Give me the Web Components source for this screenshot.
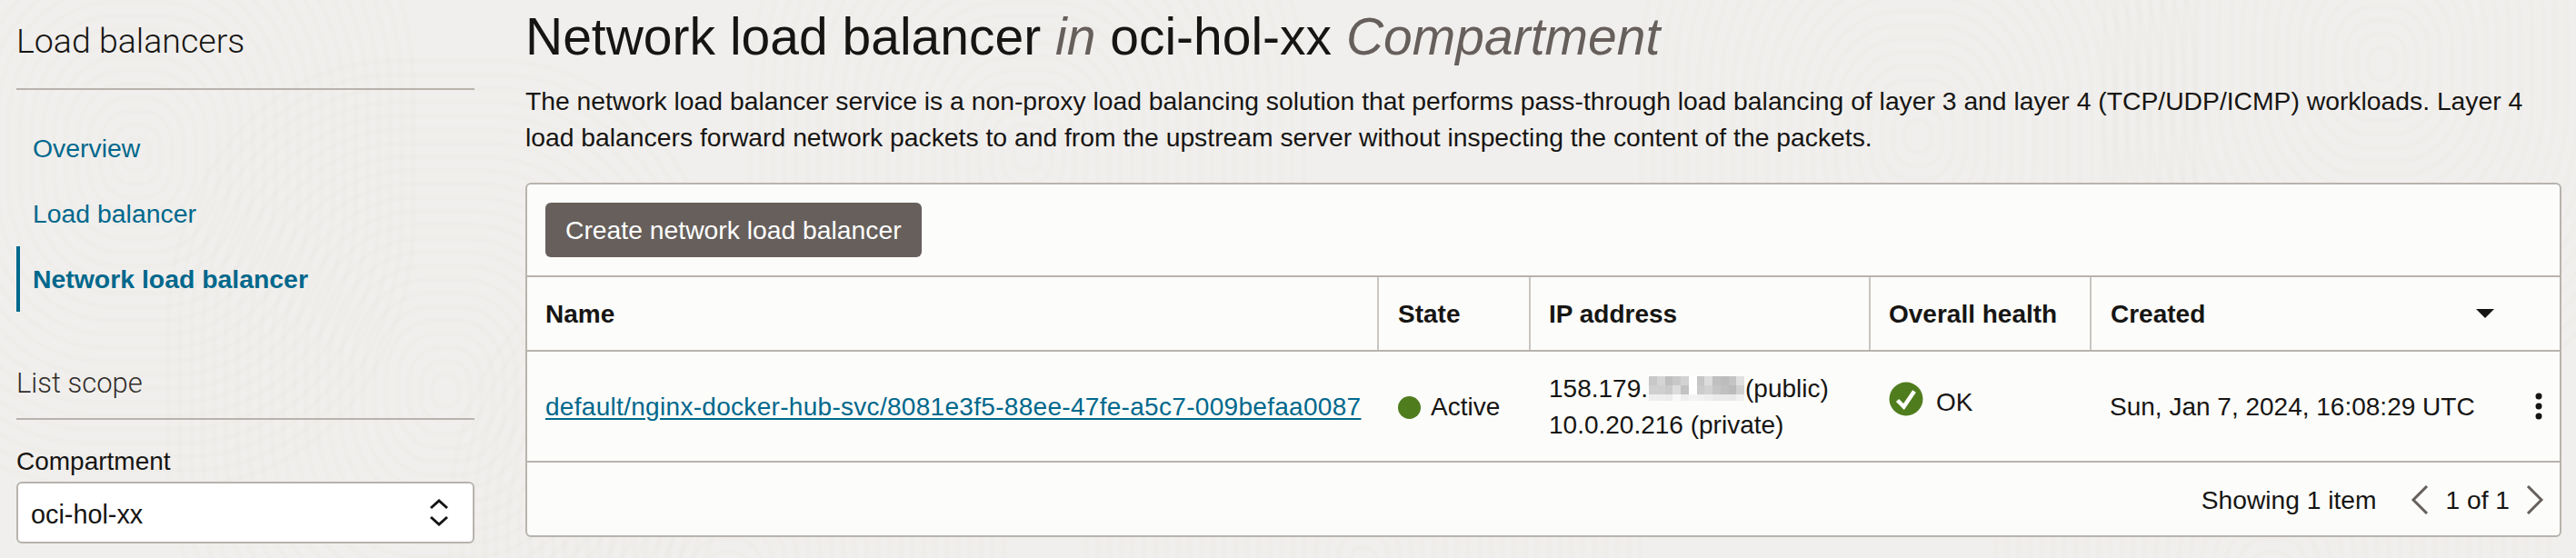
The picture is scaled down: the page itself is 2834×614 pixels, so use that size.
<!doctype html>
<html lang="en">
<head>
<meta charset="utf-8">
<title>Network load balancer</title>
<style>
html, body { margin: 0; height: 100%; }
body {
    width: 2834px;
    height: 614px;
    overflow: hidden;
    color: #161513;
    font-family: "Liberation Sans", Arial, sans-serif;
    background-color: #f1efed;
}
</style>
</head>
<body>
<lb-page>
    <lb-texture slot="back"></lb-texture>
    <lb-sidebar slot="side"></lb-sidebar>
    <lb-main slot="main"></lb-main>
</lb-page>

<script>
class LbPage extends HTMLElement {
    constructor(){
        super();
        this.attachShadow({mode:'open'});
        this.shadowRoot.innerHTML = `
            <style>
                :host{
                    display: flex;
                    position: relative;
                    width: 2834px;
                    height: 614px;
                    overflow: hidden;
                    background: #f1efed;
                }
                .side{ position: relative; width: 504px; margin-left: 18px; flex: none; }
                .main{ position: relative; width: 2240px; margin-left: 56px; flex: none; }
            </style>
            <slot name="back"></slot>
            <div class="side"><slot name="side"></slot></div>
            <div class="main"><slot name="main"></slot></div>
        `;
    }
}

// faint fingerprint lines behind the whole page
class LbTexture extends HTMLElement {
    constructor(){
        super();
        this.attachShadow({mode:'open'});
        let centers = [[150,170],[490,430],[1130,170],[2110,150],[1500,620],[2620,70],[800,640],[2500,640]];
        let rings = '';
        centers.forEach(([x, y]) => {
            for(let r = 14; r < 300; r += 12){
                let w = r * 1.05, h = r * 1.25;
                rings += `<rect x="${x - w}" y="${y - h}" width="${w * 2}" height="${h * 2}" rx="${w * .8}" ry="${h * .8}"/>`;
            }
        });
        this.shadowRoot.innerHTML = `
            <style>
                :host{ position: absolute; inset: 0; display: block; }
                svg{ display: block; }
            </style>
            <svg width="2834" height="614" fill="none" stroke="#8a8178" stroke-opacity=".02" stroke-width="5">${rings}</svg>
        `;
    }
}

class LbSidebar extends HTMLElement {
    constructor(){
        super();
        this.attachShadow({mode:'open'});
        this.shadowRoot.innerHTML = `
            <style>
                :host{ display: block; }
                h2{
                    margin: 0;
                    height: 99px;
                    box-sizing: border-box;
                    padding-top: 23px;
                    font: 300 37.5px/44px Roboto, "Liberation Sans", sans-serif;
                    color: #161513;
                    border-bottom: 2px solid #b8b3ad;
                }
                nav{ display: flex; flex-direction: column; margin-top: 28px; }
                a{
                    display: flex;
                    align-items: center;
                    height: 72px;
                    padding: 1px 0 0 14px;
                    box-sizing: border-box;
                    border-left: 4px solid transparent;
                    font-size: 28.4px;
                    color: #00688c;
                    text-decoration: none;
                }
                a.on{ border-left-color: #00688c; font-weight: 700; }
                h3{
                    margin: 0;
                    height: 119px;
                    box-sizing: border-box;
                    padding-top: 61px;
                    font: 300 31px/36px Roboto, "Liberation Sans", sans-serif;
                    color: #312d2a;
                    border-bottom: 2px solid #b8b3ad;
                }
                label{ display: block; margin-top: 28px; font-size: 28px; line-height: 36px; color: #161513; }
            </style>
            <h2>Load balancers</h2>
            <nav>
                <a>Overview</a>
                <a>Load balancer</a>
                <a class="on">Network load balancer</a>
            </nav>
            <h3>List scope</h3>
            <label>Compartment</label>
            <lb-select value="oci-hol-xx"></lb-select>
        `;
    }
}

class LbSelect extends HTMLElement {
    constructor(){
        super();
        this.attachShadow({mode:'open'});
        this.shadowRoot.innerHTML = `
            <style>
                :host{
                    display: flex;
                    align-items: center;
                    justify-content: space-between;
                    box-sizing: border-box;
                    height: 68px;
                    margin-top: 4px;
                    padding: 0 27px 0 14px;
                    background: #fff;
                    border: 2px solid #b8b3ad;
                    border-radius: 6px;
                    font-size: 28.8px;
                    color: #161513;
                }
                span{ padding-top: 5px; }
                svg{ display: block; }
            </style>
            <span>${this.getAttribute('value')}</span>
            <svg width="20" height="30" viewBox="0 0 20 30" fill="none" stroke="#161513" stroke-width="3">
                <path d="M1 10l9-8 9 8"/><path d="M1 20l9 8 9-8"/>
            </svg>
        `;
    }
}

class LbMain extends HTMLElement {
    constructor(){
        super();
        this.attachShadow({mode:'open'});
        this.shadowRoot.innerHTML = `
            <style>
                :host{ display: block; }
                h1{
                    margin: 0;
                    padding-top: 7px;
                    font-size: 57px;
                    line-height: 66px;
                    font-weight: 400;
                    color: #161513;
                    white-space: nowrap;
                }
                h1 em{ color: #665f5b; }
                p{
                    margin: 18px 0 0;
                    font-size: 28.3px;
                    line-height: 40px;
                    color: #161513;
                    white-space: nowrap;
                }
                lb-table{ margin-top: 30px; }
            </style>
            <h1>Network load balancer <em>in</em> oci-hol-xx <em>Compartment</em></h1>
            <p>The network load balancer service is a non-proxy load balancing solution that performs pass-through load balancing of layer 3 and layer 4 (TCP/UDP/ICMP) workloads. Layer 4<br>load balancers forward network packets to and from the upstream server without inspecting the content of the packets.</p>
            <lb-table></lb-table>
        `;
    }
}

class LbBlur extends HTMLElement {
    constructor(){
        super();
        this.attachShadow({mode:'open'});
        // pixelated mask over the hidden part of the address
        let shades = [
            'c8','d5','bf','c8','d2','ff','c5','dc','c0','bc','c4','e0',
            'd0','cf','ca','dc','c2','ff','cb','d2','c5','c0','bb','d0',
            'ee','ee','ec','f8','ee','f4','f2','ee','ea','ea','e8','f0'
        ];
        this.shadowRoot.innerHTML = `
            <style>
                :host{
                    display: inline-block;
                    overflow: hidden;
                    width: 105px;
                    height: 27px;
                    vertical-align: -4px;
                    margin: 0 1px;
                }
                div{
                    display: grid;
                    grid-template-columns: repeat(12, 8.75px);
                    grid-template-rows: 10px 10px 7px;
                }
            </style>
            <div>${shades.map(c => `<i style="background:#${c}${c}${c}"></i>`).join('')}</div>
        `;
    }
}

class LbTable extends HTMLElement {
    constructor(){
        super();
        this.attachShadow({mode:'open'});
        this.shadowRoot.innerHTML = `
            <style>
                :host{
                    display: block;
                    box-sizing: border-box;
                    width: 2240px;
                    height: 390px;
                    background: #fcfcfa;
                    border: 2px solid #b8b3ad;
                    border-radius: 6px;
                    font-size: 28px;
                    color: #161513;
                }
                .bar{ height: 102px; box-sizing: border-box; padding: 20px 0 0 20px; border-bottom: 2px solid #b8b3ad; }
                .btn{
                    display: inline-flex;
                    align-items: center;
                    box-sizing: border-box;
                    height: 60px;
                    padding: 0 22px;
                    border-radius: 6px;
                    background: #665f5b;
                    color: #fff;
                    font-size: 28.3px;
                }
                .row{ display: grid; grid-template-columns: 937px 167px 374px 243px 1fr; }
                .head{ height: 82px; border-bottom: 2px solid #b8b3ad; box-sizing: border-box; font-weight: 700; }
                .head > div{ display: flex; align-items: center; padding: 2px 0 0 20px; border-right: 2px solid #c9c5c0; }
                .head > div:nth-child(2){ padding-left: 21px; }
                .head > div:last-child{ border-right: 0; justify-content: space-between; padding: 2px 72px 0 21px; }
                .head svg{ margin-top: -2px; }
                .body{ height: 122px; border-bottom: 2px solid #b8b3ad; box-sizing: border-box; position: relative; }
                .body > div{ display: flex; align-items: center; padding: 2px 2px 0 20px; }
                .body > div.state{ padding-left: 21px; }
                a{ color: #00688c; text-decoration: underline; text-underline-offset: 3px; white-space: nowrap; letter-spacing: .3px; }
                .dot{ width: 25px; height: 25px; border-radius: 50%; background: #4f7d1e; margin-right: 11px; flex: none; }
                .ip{ line-height: 40px; white-space: nowrap; flex-direction: column; align-items: flex-start !important; justify-content: center; }
                .ok{ margin-right: 14px; flex: none; display: block; }
                .body > .okcell{ padding-bottom: 18px; }
                .okcell span{ padding-top: 8px; }
                .kebab{ position: absolute; right: 19px; top: 45px; }
                .foot{ display: flex; align-items: center; justify-content: flex-end; height: 82px; padding: 0 17px 0 0; box-sizing: border-box; font-size: 28.2px; }
                .foot svg{ display: block; }
                .count{ margin-right: 38px; }
                .pages{ margin: 0 18px; }
            </style>
            <div class="bar"><span class="btn">Create network load balancer</span></div>
            <div class="row head">
                <div>Name</div>
                <div>State</div>
                <div>IP address</div>
                <div>Overall health</div>
                <div>Created
                    <svg width="20" height="10" viewBox="0 0 20 10"><path d="M0 0h20L10 10z" fill="#161513"/></svg>
                </div>
            </div>
            <div class="row body">
                <div><a>default/nginx-docker-hub-svc/8081e3f5-88ee-47fe-a5c7-009befaa0087</a></div>
                <div class="state"><span class="dot"></span>Active</div>
                <div class="ip"><span>158.179.<lb-blur></lb-blur>(public)</span><span>10.0.20.216 (private)</span></div>
                <div class="okcell">
                    <svg class="ok" width="38" height="38" viewBox="0 0 38 38">
                        <circle cx="19" cy="19" r="18.5" fill="#4f7d1e"/>
                        <path d="M9.5 20.5l7 7L28 10.5" fill="none" stroke="#fff" stroke-width="4.5"/>
                    </svg><span>OK</span>
                </div>
                <div>Sun, Jan 7, 2024, 16:08:29 UTC</div>
                <svg class="kebab" width="8" height="30" viewBox="0 0 8 30" fill="#161513">
                    <circle cx="4" cy="4" r="3.5"/><circle cx="4" cy="15" r="3.5"/><circle cx="4" cy="26" r="3.5"/>
                </svg>
            </div>
            <div class="foot">
                <span class="count">Showing 1 item</span>
                <svg width="20" height="32" viewBox="0 0 20 32" fill="none" stroke="#665f5b" stroke-width="3"><path d="M18 1 3 16l15 15"/></svg>
                <span class="pages">1 of 1</span>
                <svg width="20" height="32" viewBox="0 0 20 32" fill="none" stroke="#665f5b" stroke-width="3"><path d="M2 1l15 15L2 31"/></svg>
            </div>
        `;
    }
}

customElements.define('lb-texture', LbTexture);
customElements.define('lb-select', LbSelect);
customElements.define('lb-blur', LbBlur);
customElements.define('lb-table', LbTable);
customElements.define('lb-sidebar', LbSidebar);
customElements.define('lb-main', LbMain);
customElements.define('lb-page', LbPage);
</script>
</body>
</html>
